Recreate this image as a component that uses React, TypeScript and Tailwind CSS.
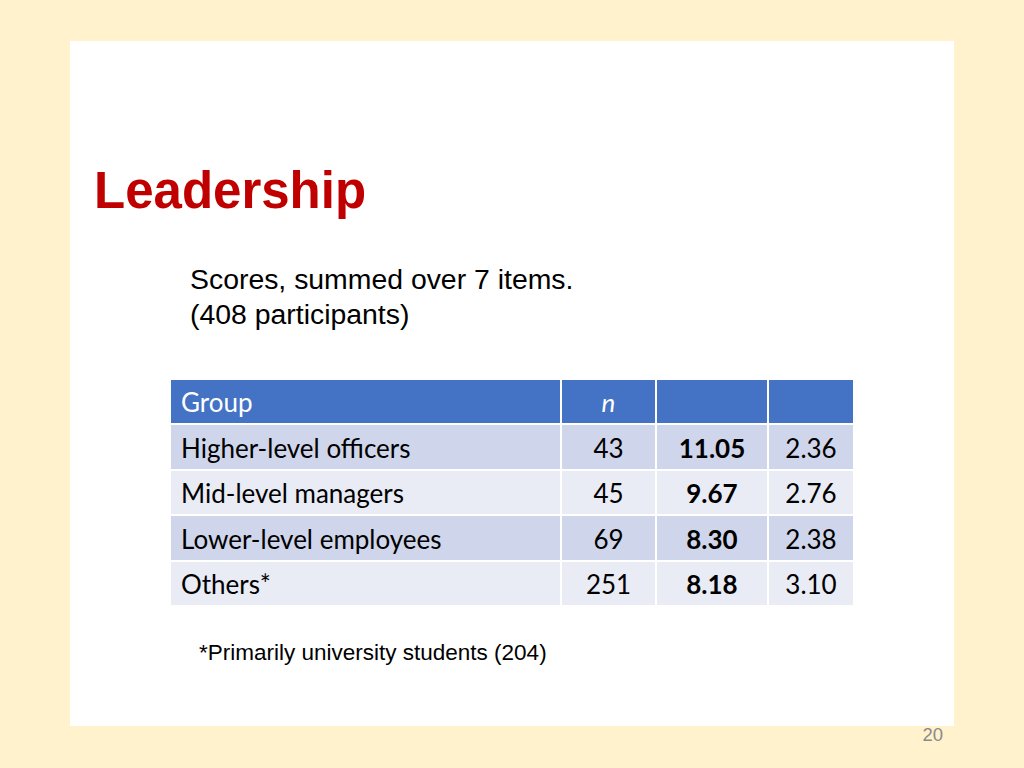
import React from 'react';

const rows = [
  { group: 'Higher-level officers', n: '43', mean: '11.05', sd: '2.36' },
  { group: 'Mid-level managers', n: '45', mean: '9.67', sd: '2.76' },
  { group: 'Lower-level employees', n: '69', mean: '8.30', sd: '2.38' },
  { group: 'Others*', n: '251', mean: '8.18', sd: '3.10' },
];

const App = () => {
  return (
    <div className="w-[1024px] h-[768px] bg-[#fff2cc] pt-[41px] pl-[70px] flex flex-col font-['Liberation_Sans',Arial,sans-serif]">
      <div className="w-[884px] h-[685px] bg-white flex flex-col">
        {/* Title */}
        <h1 className="mt-[124px] ml-[24px] text-[51px] leading-[51px] font-bold text-[#c00000]">
          Leadership
        </h1>

        {/* Subtitle */}
        <div className="mt-[46px] ml-[120px] text-[28.4px] leading-[35px] text-black">
          <p>Scores, summed over 7 items.</p>
          <p>(408 participants)</p>
        </div>

        {/* Table */}
        <div className="mt-[48px] ml-[101px] w-[682px] grid grid-cols-[389px_93px_110px_84px] gap-[2px] font-['Lato','Carlito',sans-serif] text-[26px] text-black">
          <div className="h-[43px] pt-[2px] bg-[#4472c4] text-white flex items-center pl-[10px]">Group</div>
          <div className="h-[43px] pt-[2px] bg-[#4472c4] text-white flex items-center justify-center italic">n</div>
          <div className="h-[43px] bg-[#4472c4]" />
          <div className="h-[43px] bg-[#4472c4]" />
          {rows.map((r, i) => {
            const bg = i % 2 === 0 ? 'bg-[#cfd5ea]' : 'bg-[#e9ebf5]';
            return (
              <React.Fragment key={r.group}>
                <div className={`h-[43.5px] pt-[3px] ${bg} flex items-center pl-[10px]`}>{r.group}</div>
                <div className={`h-[43.5px] pt-[3px] ${bg} flex items-center justify-center`}>{r.n}</div>
                <div className={`h-[43.5px] pt-[3px] ${bg} flex items-center justify-center font-bold`}>{r.mean}</div>
                <div className={`h-[43.5px] pt-[3px] ${bg} flex items-center justify-center`}>{r.sd}</div>
              </React.Fragment>
            );
          })}
        </div>

        {/* Footnote */}
        <p className="mt-[31px] ml-[129px] text-[22.5px] text-black">
          *Primarily university students (204)
        </p>
      </div>

      {/* Slide number */}
      <div className="w-[884px] flex justify-end pr-[11px] text-[18.5px] leading-[18px] text-[#8a8a8a]">
        20
      </div>
    </div>
  );
};

export default App;
